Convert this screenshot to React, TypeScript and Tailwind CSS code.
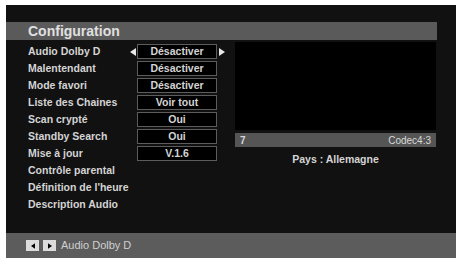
const rows = [
  { label: "Audio Dolby D", value: "Désactiver", arrows: true },
  { label: "Malentendant", value: "Désactiver" },
  { label: "Mode favori", value: "Désactiver" },
  { label: "Liste des Chaines", value: "Voir tout" },
  { label: "Scan crypté", value: "Oui" },
  { label: "Standby Search", value: "Oui" },
  { label: "Mise à jour", value: "V.1.6" },
  { label: "Contrôle parental" },
  { label: "Définition de l'heure" },
  { label: "Description Audio" },
];

function Tri({ dir, className }: { dir: "l" | "r"; className: string }) {
  return (
    <svg width="6" height="8" viewBox="0 0 6 8" className={className}>
      {dir === "l" ? <path d="M6 0 L0 4 L6 8 Z" fill="currentColor" /> : <path d="M0 0 L6 4 L0 8 Z" fill="currentColor" />}
    </svg>
  );
}

export default function App() {
  return (
    <div className="w-[459px] h-[262px] bg-white pt-[5px] pl-[6px] pr-[3px] pb-[4px] font-['Liberation_Sans',Arial,sans-serif]">
      <div className="h-full flex flex-col bg-[#111111]">
        <div className="h-[17px]" />
        <div className="h-[18px] w-[431px] bg-[#5a5a5a] pl-[22px] flex items-center">
          <span className="text-[14px] font-bold text-[#e0e0e0] leading-none">Configuration</span>
        </div>

        <div className="flex">
          <div className="w-[229px] pl-[22px] pt-[3px]">
            {rows.map((r) => (
              <div key={r.label} className="h-[17px] flex items-center">
                <div className="w-[100px] text-[10.5px] font-bold text-[#d4d4d4] whitespace-nowrap">{r.label}</div>
                {r.value && (
                  <div className="flex items-center">
                    <div className="w-[9px] flex justify-center">
                      {r.arrows && <Tri dir="l" className="text-[#e8e8e8]" />}
                    </div>
                    <div className="w-[80px] h-[15px] border border-[#5c5c5c] bg-black flex items-center justify-center text-[10.5px] font-bold text-[#d4d4d4]">
                      {r.value}
                    </div>
                    <div className="w-[9px] flex justify-center">
                      {r.arrows && <Tri dir="r" className="text-[#e8e8e8]" />}
                    </div>
                  </div>
                )}
              </div>
            ))}
          </div>

          <div className="w-[201px] pt-[2px] flex flex-col">
            <div className="h-[88px] bg-black" />
            <div className="mt-[3px] h-[14px] bg-[#555555] flex items-center justify-between px-[5px] text-[10px] text-[#d8d8d8]">
              <span className="font-bold">7</span>
              <span>Codec4:3</span>
            </div>
            <div className="mt-[5px] text-center text-[10.5px] font-bold text-[#d4d4d4]">Pays : Allemagne</div>
          </div>
        </div>

        <div className="flex-1" />

        <div className="h-[25px] bg-[#5c5c5c] flex items-center pl-[20px] gap-[4px]">
          <div className="w-[13px] h-[11px] bg-[#dcdcdc] flex items-center justify-center">
            <Tri dir="l" className="text-black w-[4px] h-[6px]" />
          </div>
          <div className="w-[13px] h-[11px] bg-[#dcdcdc] flex items-center justify-center">
            <Tri dir="r" className="text-black w-[4px] h-[6px]" />
          </div>
          <span className="text-[11px] text-[#d0d0d0] ml-[1px]">Audio Dolby D</span>
        </div>
      </div>
    </div>
  );
}
